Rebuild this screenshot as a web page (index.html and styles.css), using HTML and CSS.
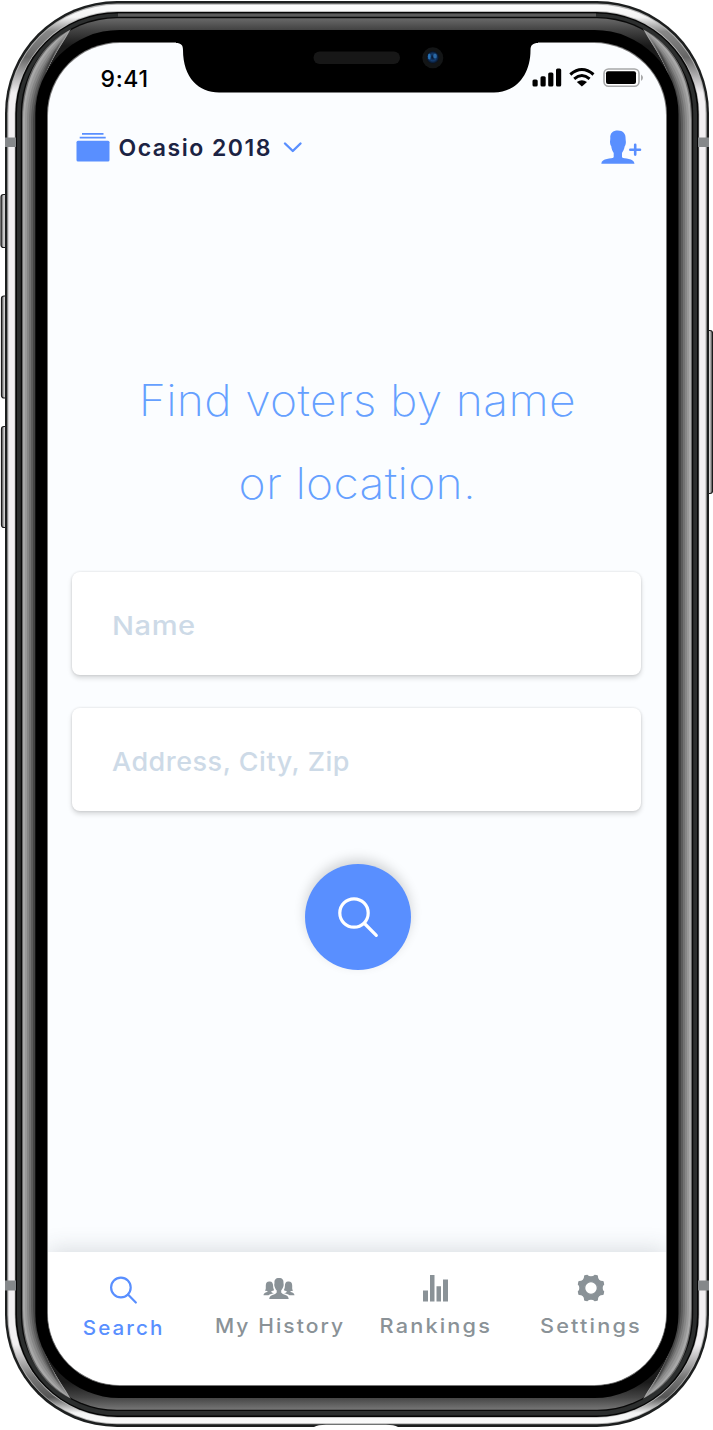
FILE: index.html
```html
<!DOCTYPE html>
<html lang="en">
<head>
<meta charset="utf-8">
<title>Find voters</title>
<link rel="stylesheet" href="styles.css">
</head>
<body>
<div class="phone">
  <svg class="frame" viewBox="0 0 713 1430" width="713" height="1430" aria-hidden="true">
    <defs>
      <linearGradient id="btnL" x1="0" x2="1" y1="0" y2="0"><stop offset="0" stop-color="#555"/><stop offset=".2" stop-color="#888"/><stop offset=".4" stop-color="#d4d4d4"/><stop offset="1" stop-color="#aaa"/></linearGradient>
      <linearGradient id="btnR" x1="1" x2="0" y1="0" y2="0"><stop offset="0" stop-color="#555"/><stop offset=".2" stop-color="#888"/><stop offset=".4" stop-color="#d4d4d4"/><stop offset="1" stop-color="#aaa"/></linearGradient>
      <linearGradient id="face" gradientUnits="userSpaceOnUse" x1="0" x2="0" y1="18" y2="1410"><stop offset="0" stop-color="#6a6a6a"/><stop offset=".008" stop-color="#454545"/><stop offset=".02" stop-color="#1a1a1a"/><stop offset=".98" stop-color="#1a1a1a"/><stop offset=".991" stop-color="#444"/><stop offset="1" stop-color="#777"/></linearGradient>
      <linearGradient id="steel" gradientUnits="userSpaceOnUse" x1="0" x2="0" y1="0" y2="1430"><stop offset="0" stop-color="#fff"/><stop offset=".012" stop-color="#f4f4f4"/><stop offset=".022" stop-color="#888"/><stop offset=".04" stop-color="#666"/><stop offset=".065" stop-color="#f2f0f2"/><stop offset=".94" stop-color="#f2f0f2"/><stop offset=".963" stop-color="#777"/><stop offset=".977" stop-color="#555"/><stop offset=".988" stop-color="#f4f4f4"/><stop offset="1" stop-color="#fff"/></linearGradient>
    </defs>
    <g stroke="#1b1b1b" stroke-width="1.2">
      <rect x="1" y="194.500" width="7" height="53" rx="2.500" fill="url(#btnL)"/>
      <rect x="1.500" y="296" width="7" height="102" rx="2.500" fill="url(#btnL)"/>
      <rect x="1.500" y="426.500" width="7" height="101" rx="2.500" fill="url(#btnL)"/>
      <rect x="705.500" y="330.500" width="7" height="163" rx="2.500" fill="url(#btnR)"/>
    </g>
    <rect x="5" y="1" width="704" height="1426" rx="112" fill="#1d1f1f"/>
    <rect x="7.300" y="3.500" width="699.400" height="1420.800" rx="110" fill="#b4b4b4"/>
    <rect x="8.500" y="4.800" width="697" height="1418.500" rx="108" fill="url(#steel)"/>
    <rect x="14.600" y="11" width="684.800" height="1406.800" rx="103" fill="#bbb"/>
    <rect x="15.300" y="12" width="683.400" height="1405" rx="102" fill="#050505"/>
    <rect x="17" y="13.500" width="680" height="1402" rx="100" fill="#2c2e2e"/>
    <path d="M118 15H596" stroke="#5c5c5c" stroke-width="3.200"/>
    <rect x="20.800" y="17" width="672.400" height="1394" rx="96" fill="#090909"/>
    <rect x="22" y="18.300" width="670" height="1391.500" rx="95" fill="url(#face)"/>
    <g id="side">
      <path fill="#686868" d="M22 120C22 74 42 44 71 29C60 50 36 74 36 125V1304C36 1355 60 1379 71 1399C42 1384 22 1356 22 1309Z"/>
      <path fill="#a8a8a8" d="M23 120C23 76 43 46 70 30C60 50 36 74 36 125V1304C36 1355 60 1379 70 1398C43 1382 23 1354 23 1309Z"/>
      <path fill="#989898" d="M25 121C25 79 45 49 68 32C58 52 36 76 36 125V1304C36 1353 58 1377 68 1396C45 1379 25 1351 25 1308Z"/>
      <path fill="#868686" d="M27 122C27 82 46 53 66 35C57 54 36 78 36 125V1304C36 1351 57 1375 66 1393C46 1375 27 1348 27 1307Z"/>
      <path fill="#727272" d="M29 123C29 84 47 57 63 39C55 56 36 80 36 125V1304C36 1349 55 1372 63 1389C47 1371 29 1345 29 1306Z"/>
      <path fill="#5c5c5c" d="M31 124C31 87 46 62 60 43C53 60 36 82 36 125V1304C36 1347 53 1368 60 1385C46 1366 31 1342 31 1305Z"/>
      <path fill="#444" d="M33 125C33 91 45 68 56 49C51 64 36 85 36 125V1304C36 1344 51 1363 56 1379C45 1360 33 1338 33 1304Z"/>
    </g>
    <use href="#side" transform="matrix(-1 0 0 1 714 0)"/>
    <rect x="35.300" y="30" width="643.200" height="1368" rx="84" fill="#000"/>
    <path d="M5 137.500H16V147H5ZM698 137.500H709V147H698ZM5 1280.500H16V1290.500H5ZM698 1280.500H709V1290.500H698Z" fill="#85888a"/>
    <path d="M314 1427Q318 1424.800 326 1424.800H386Q394 1424.800 398 1427Z" fill="#fff"/>
  </svg>

  <div class="screen">
    <div class="status">
      <span class="time">9:41</span>
      <svg width="112" height="22" viewBox="531 67 112 22" aria-hidden="true">
        <g fill="#000">
          <rect x="532.500" y="79.500" width="5.200" height="7" rx="1.500"/><rect x="540.500" y="76.300" width="5.200" height="10.200" rx="1.500"/><rect x="548.200" y="72.500" width="5.200" height="14" rx="1.500"/><rect x="556" y="68.500" width="5.200" height="18" rx="1.500"/>
          <path d="M576.800 82.100Q581.900 78.300 587 82.100L581.900 86.600Z"/>
        </g>
        <path d="M570.300 74.500Q581.900 64.500 593.500 74.500M574.200 78.800Q581.900 72.300 589.600 78.800" fill="none" stroke="#000" stroke-width="3"/>
        <rect x="604" y="69" width="35" height="17.300" rx="4.500" fill="#fff" stroke="#a7a8a9" stroke-width="1.600"/>
        <rect x="606" y="71.200" width="30" height="12.900" rx="2"/>
        <path d="M641 74.500Q645 77.700 641 81Z" fill="#a7a8a9"/>
      </svg>
    </div>

    <header class="topbar">
      <svg class="folder" width="34" height="30" viewBox="0 0 34 30" fill="#598fff" aria-hidden="true"><path d="M6 1H27.500V2.800H6ZM3.700 4.800H29.700V6.600H3.700Z"/><rect x=".5" y="8.800" width="33" height="20.700" rx="1.500"/></svg>
      <span class="campaign">Ocasio 2018</span>
      <svg class="chevron" width="20" height="14" viewBox="0 0 20 14" fill="none" stroke="#598fff" stroke-width="2.400" stroke-linecap="round" stroke-linejoin="round" aria-hidden="true"><path d="M2 2.500L9.800 10L17.500 2.500"/></svg>
      <svg class="adduser" width="41" height="35" viewBox="601 130 41 35" fill="#598fff" aria-hidden="true"><path d="M617.800 130.500C623 130.500 625.900 133.500 625.600 139L625.900 142C625.800 144 625.400 145.500 624.800 146C624 150 622.500 152 622 153V157.300C624 159.500 634 157.500 634.500 163.800H601.300C601.500 157.500 612 159.500 613.700 157.300V153C612.500 151 611.500 149 611.200 146C610.300 145 610.100 143.500 610 142L610.300 138.500C609.800 133 613 130.500 617.800 130.500Z"/><path d="M630.300 149.700H640M635.200 144.800V154.600" stroke="#598fff" stroke-width="2.600" stroke-linecap="round"/></svg>
    </header>

    <main class="search">
      <h1 class="title"><span class="line">Find voters by name</span><span class="line">or location.</span></h1>
      <div class="field"><span class="placeholder wide">Name</span></div>
      <div class="field"><span class="placeholder">Address, City, Zip</span></div>
      <button class="go" aria-label="Search"><svg width="44" height="44" viewBox="0 0 44 44" fill="none" stroke="#fff" stroke-width="3.200" stroke-linecap="round"><circle cx="18" cy="18" r="14.200"/><path d="M28.500 28.500L40.300 40.300"/></svg></button>
    </main>

    <nav class="tabs">
      <div class="tab tab-search"><svg width="28" height="28" viewBox="0 0 28 28" fill="none" stroke="#598fff" stroke-width="2.200" stroke-linecap="round" aria-hidden="true"><circle cx="11.900" cy="11.500" r="9.800"/><path d="M19 18.600L26.800 26.500"/></svg><span>Search</span></div>
      <div class="tab tab-history"><svg width="32" height="28" viewBox="263.500 1274 32 28" fill="#8a9297" aria-hidden="true"><path d="M279.500 1278C283 1278 284.200 1280 284 1283L284.200 1285C283.900 1287.500 282.500 1289.500 281.700 1290.500V1292.500C283 1295.200 289 1294 289.200 1299H269.700C270 1294 276 1295.200 277.200 1292.500V1290.500C276 1289.300 275 1287 274.700 1285L275 1283C274.700 1280 276 1278 279.500 1278Z"/><path id="aide" d="M269.700 1281.500C272.300 1281 273.700 1283 273.600 1286C273.600 1289 274.800 1289.500 274.500 1290.300C274.300 1290.900 272.500 1291 271.700 1291.300C271.800 1293 273.600 1293 274.300 1293.300C271.500 1294 269.600 1294.500 269 1295.300H264C264.200 1291.800 268 1293 268.200 1291.300C267 1291 265.700 1291 265.600 1290.300C266.600 1289.500 266.200 1288 266.300 1285.500C266.300 1283 267.500 1281.500 269.700 1281.500Z"/><use href="#aide" transform="matrix(-1 0 0 1 559 0)"/></svg><span>My History</span></div>
      <div class="tab tab-rankings"><svg width="25" height="28" viewBox="0 0 25 28" fill="#8a9297" aria-hidden="true"><path d="M0 16.500H5V27.500H0ZM7 1H11.500V27.500H7ZM13.500 12.200H18V27.500H13.500ZM20 5.500H25V27.500H20Z"/></svg><span>Rankings</span></div>
      <div class="tab tab-settings"><svg width="28" height="28" viewBox="-14 -14 28 28" aria-hidden="true"><path fill="#8a9297" stroke="#8a9297" stroke-width="1.400" stroke-linejoin="round" fill-rule="evenodd" d="M-6.200 -12L-3.700 -12.500C-2.500 -10.500 2.500 -10.500 3.700 -12.500L6.200 -12C6.200 -8.500 8.500 -6.200 12 -6.200L12.500 -3.700C10.500 -2.500 10.500 2.500 12.500 3.700L12 6.200C8.500 6.200 6.200 8.500 6.200 12L3.700 12.500C2.500 10.500 -2.500 10.500 -3.700 12.500L-6.200 12C-6.200 8.500 -8.500 6.200 -12 6.200L-12.500 3.700C-10.500 2.500 -10.500 -2.500 -12.500 -3.700L-12 -6.200C-8.500 -6.200 -6.200 -8.500 -6.200 -12ZM6.400 0A6.400 6.400 0 1 0 -6.400 0A6.400 6.400 0 1 0 6.400 0Z"/></svg><span>Settings</span></div>
    </nav>
  </div>

  <svg class="notch" width="362" height="52" viewBox="176 41 362 52" aria-hidden="true">
    <defs><radialGradient id="lens"><stop offset="0" stop-color="#07142c"/><stop offset=".55" stop-color="#133c70"/><stop offset="1" stop-color="#071020"/></radialGradient></defs>
    <path d="M176 41V43C181 43 183 45 183 50C183 78 199 92.500 219 92.500H494C515 92.500 530.500 76 530.500 50C530.500 45 533 43 538 43V41Z"/>
    <rect x="313.500" y="51.500" width="86.500" height="12.500" rx="6.200" fill="#171717"/>
    <circle cx="432.800" cy="57.800" r="10.500" fill="#131516"/><circle cx="432.800" cy="57.300" r="6.200" fill="url(#lens)"/>
    <ellipse cx="429.300" cy="56.500" rx="1.400" ry="3" fill="#2772b5"/><ellipse cx="435" cy="56" rx="1.800" ry="2.500" fill="#2a68a5"/>
  </svg>
</div>
</body>
</html>
```
FILE: styles.css
```css
* { box-sizing: border-box; }
body { margin: 0; background: #fff; font-family: Inter, "Liberation Sans", sans-serif; }
.phone { position: relative; width: 713px; height: 1430px; padding: 43px 0 0 47.500px; overflow: hidden; }
.frame { position: absolute; left: 0; top: 0; }
.notch { position: absolute; left: 176px; top: 41px; }
.screen { position: relative; display: flex; flex-direction: column; width: 618.500px; height: 1341.500px; border-radius: 72px; overflow: hidden; background: #fbfdff; box-shadow: 0 0 0 1px #777; }
.status { display: flex; justify-content: space-between; align-items: flex-start; height: 77px; padding: 24px 23px 0 53px; }
.time { font-size: 23px; line-height: 24px; font-weight: 550; letter-spacing: .7px; }
.topbar { display: flex; align-items: center; height: 54px; padding: 0 24px 0 28px; }
.campaign { margin: 2px 0 0 9px; font-size: 23px; line-height: 30px; font-weight: 600; letter-spacing: 1.500px; color: #1b2343; white-space: nowrap; }
.chevron { margin: 2px 0 0 11.500px; }
.adduser { margin-left: auto; }
.search { display: flex; flex-direction: column; align-items: center; flex: 1; padding-top: 185px; }
.title { margin: 0 0 47px 2px; font-size: 43px; line-height: 83px; font-weight: 200; text-align: center; color: #65a0ff; white-space: nowrap; letter-spacing: .3px; }
.line { display: block; transform: scaleX(1.075); }
.field { width: 569px; height: 103px; margin-bottom: 33px; padding-left: 40px; border-radius: 8px; background: #fff; font-size: 26px; line-height: 108px; font-weight: 450; letter-spacing: .5px; color: #cddae7; box-shadow: 0 0 2px 1px rgba(0,0,0,.06), 0 3px 5px rgba(0,0,0,.15); }
.placeholder { display: inline-block; transform: scaleX(1.037); transform-origin: left; }
.wide { transform: scaleX(1.12); }
.go { display: flex; align-items: center; justify-content: center; width: 106px; height: 106px; margin: 20px 0 0 2px; border: 0; padding: 0; border-radius: 50%; background: #598fff; box-shadow: 0 -5px 12px rgba(0,0,0,.16); }
.tabs { display: grid; grid-template-columns: 150px 162px 152px 154.500px; height: 133px; padding-top: 22px; background: #fff; box-shadow: 0 -2px 22px rgba(50,60,70,.18); }
.tab { display: flex; flex-direction: column; align-items: center; color: #8a9297; font-size: 20px; line-height: 26px; font-weight: 450; letter-spacing: 2px; }
.tab span { margin: 11px -2px 0 0; white-space: nowrap; transform: scaleX(1.05); }
.tab-history { padding-left: 1px; }
.tab-search { padding-top: 2px; color: #598fff; }
.tab-search span { transform: scaleX(1.03); }
.tab-rankings span, .tab-settings span { transform: scaleX(1.085); margin-right: -1px; }
.tab-settings { padding-left: 4px; }
```
